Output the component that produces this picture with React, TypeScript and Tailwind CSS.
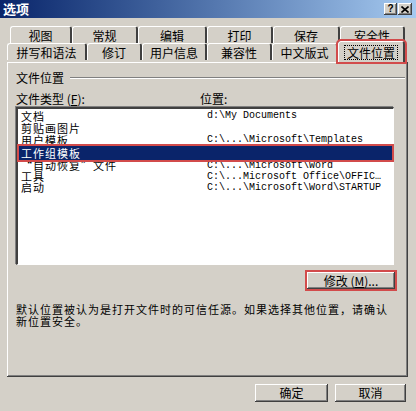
import React from "react";

const raised =
  "shadow-[inset_-1px_-1px_0_#404040,inset_1px_1px_0_#ffffff,inset_-2px_-2px_0_#808080,inset_2px_2px_0_#d4d0c8]";

function Tab({ label, w, selected }: { label: string; w: number; selected?: boolean }) {
  return (
    <div
      style={{ width: w }}
      className={
        "relative flex items-center justify-center rounded-t-[3px] border-l border-t border-white border-r-2 border-r-[#404040] " +
        (selected
          ? "h-[21px] -mt-[2px] -mb-[2px] bg-[#d4d0c8] z-10 outline-2 outline-[#d24b4b]"
          : "h-[17px]")
      }
    >
      <span
        className={
          "leading-[13px] " + (selected ? "outline outline-1 outline-dotted outline-black px-[2px]" : "")
        }
      >
        {label}
      </span>
    </div>
  );
}

const rows: { name: string; path: string; cls: string; sel?: boolean }[] = [
  { name: "文档", path: "d:\\My Documents", cls: "h-[12px] leading-[12px]" },
  { name: "剪贴画图片", path: "", cls: "h-[12px] leading-[12px]" },
  { name: "用户模板", path: "C:\\...\\Microsoft\\Templates", cls: "h-[12px] leading-[12px]" },
  { name: "工作组模板", path: "", cls: "h-[14px] leading-[14px]", sel: true },
  { name: "“自动恢复”文件", path: "C:\\...\\Microsoft\\Word", cls: "h-[11px] leading-[11px]" },
  { name: "工具", path: "C:\\...Microsoft Office\\OFFIC…", cls: "h-[11px] leading-[11px]" },
  { name: "启动", path: "C:\\...\\Microsoft\\Word\\STARTUP", cls: "h-[11px] leading-[11px]" },
];

export default function App() {
  return (
    <div className="w-[416px] h-[411px] bg-[#d4d0c8] flex flex-col text-[12px] text-black font-['Noto_Sans_CJK_SC','Noto_Sans',sans-serif] overflow-hidden">
      {/* title bar */}
      <div className="h-[18px] flex items-center justify-between pl-[3px] pr-[4px] bg-gradient-to-r from-[#0a246a] to-[#a6caf0]">
        <span className="text-white font-bold text-[13px] leading-[14px]">选项</span>
        <div className="flex gap-[1px]">
          <div className={"w-[13px] h-[12px] bg-[#d4d0c8] flex items-center justify-center " + raised}>
            <span className="font-['Liberation_Sans',sans-serif] font-bold text-[10px] leading-[10px]">?</span>
          </div>
          <div className={"w-[14px] h-[12px] bg-[#d4d0c8] flex items-center justify-center " + raised}>
            <svg width="8" height="7" viewBox="0 0 8 7">
              <path d="M0.5 0.5 L7.5 6.5 M7.5 0.5 L0.5 6.5" stroke="#000" strokeWidth="1.6" />
            </svg>
          </div>
        </div>
      </div>

      {/* tabs */}
      <div className="mt-[8px] flex flex-col">
        <div className="flex ml-[10px]">
          <Tab label="视图" w={62} />
          <Tab label="常规" w={66} />
          <Tab label="编辑" w={69} />
          <Tab label="打印" w={66} />
          <Tab label="保存" w={67} />
          <Tab label="安全性" w={65} />
        </div>
        <div className="flex ml-[7px] h-[19px] items-start">
          <Tab label="拼写和语法" w={80} />
          <Tab label="修订" w={55} />
          <Tab label="用户信息" w={65} />
          <Tab label="兼容性" w={65} />
          <Tab label="中文版式" w={66} />
          <Tab label="文件位置" w={67} selected />
        </div>
      </div>

      {/* panel */}
      <div
        className={
          "mx-[7px] w-[401px] h-[315px] flex flex-col pl-[9px] pt-[9px] " +
          "shadow-[inset_-1px_-1px_0_#404040,inset_1px_1px_0_#ffffff,inset_-2px_-2px_0_#808080]"
        }
      >
        <div className="flex items-center gap-[6px] h-[13px] pr-[3px]">
          <span className="leading-[13px]">文件位置</span>
          <div className="flex-1 h-[2px] border-t border-[#808080] border-b border-b-white" />
        </div>
        <div className="flex mt-[8px] h-[13px] leading-[13px]">
          <span className="w-[184px]">文件类型 (<span className="underline">F</span>):</span>
          <span>位置:</span>
        </div>
        <div className="mt-[2px] w-[378px] h-[158px] bg-white border-l-2 border-t-2 border-[#404040] border-r border-b border-r-white border-b-white pt-[1px] pl-[1px] pr-[1px] shadow-[-1px_-1px_0_#808080]">
          {rows.map((r) => (
            <div
              key={r.name}
              className={
                "flex items-center " +
                r.cls +
                (r.sel ? " bg-[#0a246a] text-white outline-2 outline-[#d24b4b]" : "")
              }
            >
              <span className="w-[188px] pl-[2px] text-[11px] tracking-[1px] whitespace-nowrap">{r.name}</span>
              <span className="font-['Liberation_Mono',monospace] text-[10px] whitespace-nowrap">
                {r.path}
              </span>
            </div>
          ))}
        </div>
        <div className="flex justify-end w-[379px] mt-[7px]">
          <div
            className={
              "w-[88px] h-[17px] flex items-center justify-center leading-[12px] outline-2 outline-[#d24b4b] " + raised
            }
          >
            修改 (<span className="underline">M</span>)...
          </div>
        </div>
        <div className="mt-[14px] text-[11px] tracking-[1px] leading-[12px] w-[384px]">
          默认位置被认为是打开文件时的可信任源。如果选择其他位置，请确认
          <br />
          新位置安全。
        </div>
      </div>

      {/* footer */}
      <div className="flex justify-end gap-[7px] pr-[10px] mt-[7px]">
        <div className={"w-[73px] h-[18px] flex items-center justify-center leading-[12px] " + raised}>确定</div>
        <div className={"w-[71px] h-[18px] flex items-center justify-center leading-[12px] " + raised}>取消</div>
      </div>
    </div>
  );
}
